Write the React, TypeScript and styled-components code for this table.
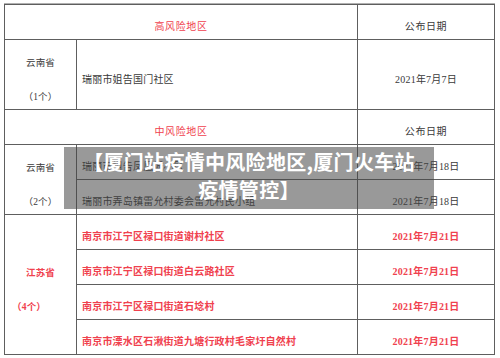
import styled, { createGlobalStyle } from 'styled-components';

type Tone = 'dark' | 'red';

interface Place {
  address: string;
  date: string;
}

interface Group {
  province: string;
  count: string;
  tone: Tone;
  tall?: boolean;
  shiftCount?: boolean;
  places: Place[];
}

const highRisk: Group[] = [
  {
    province: '云南省',
    count: '（1个）',
    tone: 'dark',
    tall: true,
    places: [{ address: '瑞丽市姐告国门社区', date: '2021年7月7日' }],
  },
];

const midRisk: Group[] = [
  {
    province: '云南省',
    count: '（2个）',
    tone: 'dark',
    places: [
      { address: '瑞丽市姐告凤凰城小区', date: '2021年7月18日' },
      { address: '瑞丽市弄岛镇雷允村委会雷允村民小组', date: '2021年7月18日' },
    ],
  },
  {
    province: '江苏省',
    count: '（4个）',
    tone: 'red',
    shiftCount: true,
    places: [
      { address: '南京市江宁区禄口街道谢村社区', date: '2021年7月21日' },
      { address: '南京市江宁区禄口街道白云路社区', date: '2021年7月21日' },
      { address: '南京市江宁区禄口街道石埝村', date: '2021年7月21日' },
      { address: '南京市溧水区石湫街道九塘行政村毛家圩自然村', date: '2021年7月21日' },
    ],
  },
];

function GroupRows({ group }: { group: Group }) {
  const span = group.tall ? 2 : group.places.length;
  return (
    <>
      <ProvinceCell $span={span} $tone={group.tone}>
        <span>{group.province}</span>
        <CountText $shift={!!group.shiftCount}>{group.count}</CountText>
      </ProvinceCell>
      {group.places.map((p) => (
        <PlaceRow key={p.address} place={p} tone={group.tone} span={group.tall ? 2 : 1} />
      ))}
    </>
  );
}

function PlaceRow({ place, tone, span }: { place: Place; tone: Tone; span: number }) {
  return (
    <>
      <AddressCell $span={span} $tone={tone}>
        {place.address}
      </AddressCell>
      <DateCell $span={span} $tone={tone}>
        {place.date}
      </DateCell>
    </>
  );
}

export default function App() {
  return (
    <>
      <GlobalStyle />
      <Page>
        <Table>
          <HeadCell $wide>高风险地区</HeadCell>
          <HeadCell $dark>公布日期</HeadCell>
          {highRisk.map((g) => (
            <GroupRows key={g.province + g.count} group={g} />
          ))}
          <HeadCell $wide>中风险地区</HeadCell>
          <HeadCell $dark>公布日期</HeadCell>
          {midRisk.map((g) => (
            <GroupRows key={g.province + g.count} group={g} />
          ))}
        </Table>
        <Banner>
          【厦门站疫情中风险地区,厦门火车站
          <br />
          疫情管控】
        </Banner>
      </Page>
    </>
  );
}

const GlobalStyle = createGlobalStyle`
  html, body {
    margin: 0;
    padding: 0;
    background: #ffffff;
  }
  body {
    width: 500px;
    height: 358px;
    overflow: hidden;
    font-family: 'Liberation Serif', 'Noto Sans CJK SC', serif;
  }
`;

const Page = styled.div`
  position: relative;
  width: 500px;
  height: 358px;
  padding: 3px 0 0 4px;
  box-sizing: border-box;
`;

const Table = styled.div`
  display: grid;
  grid-template-columns: 71px 280px 136px;
  grid-auto-rows: 34px;
  gap: 1px;
  padding: 1px;
  width: 491px;
  box-sizing: border-box;
  background: #5e5e5e;
  border-top: 1px solid #b0b0b0;
`;

const BaseCell = styled.div<{ $span?: number; $tone?: Tone }>`
  background: #ffffff;
  grid-row: span ${({ $span }) => $span ?? 1};
  display: flex;
  align-items: center;
  box-sizing: border-box;
  padding-top: 10px;
  font-size: 10px;
  line-height: 14px;
  letter-spacing: 0.2px;
  white-space: nowrap;
  overflow: hidden;
  color: ${({ $tone }) => ($tone === 'red' ? '#f0414e' : '#3a3a3a')};
  font-weight: ${({ $tone }) => ($tone === 'red' ? 700 : 400)};
`;

const HeadCell = styled(BaseCell)<{ $wide?: boolean; $dark?: boolean }>`
  grid-column: span ${({ $wide }) => ($wide ? 2 : 1)};
  justify-content: center;
  letter-spacing: 0.6px;
  color: ${({ $dark }) => ($dark ? '#3a3a3a' : '#f0414e')};
`;

const ProvinceCell = styled(BaseCell)`
  flex-direction: column;
  justify-content: center;
  align-items: stretch;
  gap: 20px;
  text-align: center;
  font-size: 9.5px;
`;

const CountText = styled.span<{ $shift: boolean }>`
  text-align: ${({ $shift }) => ($shift ? 'left' : 'center')};
  padding-left: ${({ $shift }) => ($shift ? '7px' : '0')};
`;

const AddressCell = styled(BaseCell)`
  padding-left: 5px;
`;

const DateCell = styled(BaseCell)`
  justify-content: center;
`;

const Banner = styled.div`
  position: absolute;
  left: 64px;
  top: 147px;
  width: 370px;
  height: 62px;
  box-sizing: border-box;
  padding-top: 1px;
  background: rgba(70, 70, 70, 0.55);
  color: #ffffff;
  font-family: 'Noto Sans CJK SC', sans-serif;
  font-weight: 700;
  font-size: 20px;
  letter-spacing: 0.3px;
  line-height: 28px;
  text-align: center;
  white-space: nowrap;
`;
